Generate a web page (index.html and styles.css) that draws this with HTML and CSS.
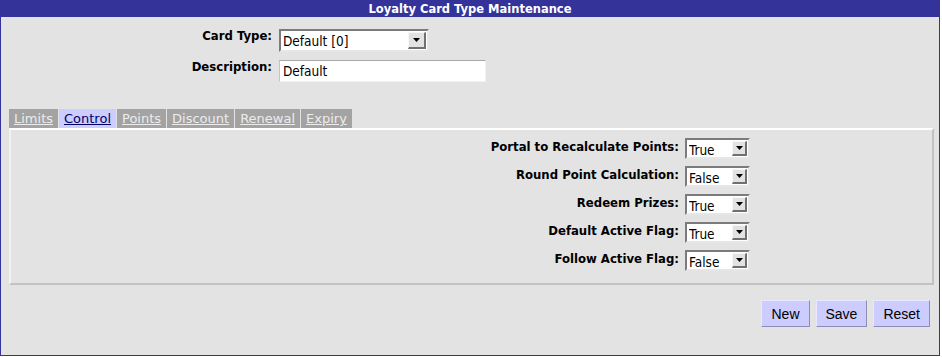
FILE: index.html
```html
<!DOCTYPE html>
<html lang="en">
<head>
    <meta charset="utf-8" />
    <link rel="stylesheet" href="styles.css">
    <title>Loyalty Card Type Maintenance</title>
</head>
<body>
    <div class="frame">
        <div class="titlebar">Loyalty Card Type Maintenance</div>

        <div class="header">
            <label for="cardType" class="hlabel">Card Type:</label>
            <span class="combo combo-wide">
                <select id="cardType"><option>Default [0]</option></select>
                <span class="arrow"><svg width="7" height="4" viewBox="0 0 7 4"><path d="M0 0h7L3.5 4z" fill="#000"/></svg></span>
            </span>
            <label for="description" class="hlabel">Description:</label>
            <input type="text" id="description" class="desc" value="Default">
        </div>

        <div class="tabs">
            <a class="tab">Limits</a>
            <a class="tab active">Control</a>
            <a class="tab">Points</a>
            <a class="tab">Discount</a>
            <a class="tab">Renewal</a>
            <a class="tab">Expiry</a>
        </div>

        <div class="panel">
            <div class="fields">
                <label class="flabel">Portal to Recalculate Points:</label>
                <span class="combo"><select><option>True</option><option>False</option></select><span class="arrow"><svg width="7" height="4" viewBox="0 0 7 4"><path d="M0 0h7L3.5 4z" fill="#000"/></svg></span></span>

                <label class="flabel">Round Point Calculation:</label>
                <span class="combo"><select><option>False</option><option>True</option></select><span class="arrow"><svg width="7" height="4" viewBox="0 0 7 4"><path d="M0 0h7L3.5 4z" fill="#000"/></svg></span></span>

                <label class="flabel">Redeem Prizes:</label>
                <span class="combo"><select><option>True</option><option>False</option></select><span class="arrow"><svg width="7" height="4" viewBox="0 0 7 4"><path d="M0 0h7L3.5 4z" fill="#000"/></svg></span></span>

                <label class="flabel">Default Active Flag:</label>
                <span class="combo"><select><option>True</option><option>False</option></select><span class="arrow"><svg width="7" height="4" viewBox="0 0 7 4"><path d="M0 0h7L3.5 4z" fill="#000"/></svg></span></span>

                <label class="flabel">Follow Active Flag:</label>
                <span class="combo"><select><option>False</option><option>True</option></select><span class="arrow"><svg width="7" height="4" viewBox="0 0 7 4"><path d="M0 0h7L3.5 4z" fill="#000"/></svg></span></span>
            </div>
        </div>

        <div class="actions">
            <button>New</button>
            <button>Save</button>
            <button>Reset</button>
        </div>
    </div>
</body>
</html>
```

FILE: styles.css
```css
body {
    margin: 0;
    background-color: #ffffff;
    font-family: "DejaVu Sans Condensed", "DejaVu Sans", sans-serif;
}

.frame {
    width: 938px;
    height: 354px;
    border: 1px solid #333399;
    background-color: #e3e3e3;
}

.titlebar {
    height: 16px;
    line-height: 16px;
    background-color: #333399;
    color: #ffffff;
    font-family: "DejaVu Sans", sans-serif;
    font-weight: bold;
    font-size: 11.5px;
    text-align: center;
}

.header {
    display: grid;
    grid-template-columns: 271px auto;
    column-gap: 7px;
    row-gap: 8px;
    margin-top: 12px;
    align-items: start;
    justify-content: start;
}

.hlabel, .flabel {
    font-weight: bold;
    font-size: 13px;
    line-height: 16px;
    text-align: right;
    color: #000000;
}

.hlabel {
    margin-top: -1px;
}

.combo {
    position: relative;
    display: inline-block;
    box-sizing: border-box;
    border-style: solid;
    border-width: 2px;
    border-color: #7b7b7b #e6e6e6 #e6e6e6 #7b7b7b;
    background-color: #ffffff;
}

.combo select {
    appearance: none;
    -webkit-appearance: none;
    border: none;
    outline: none;
    background: transparent;
    width: 100%;
    height: 100%;
    padding: 0 0 0 2px;
    margin: 0;
    font-family: "DejaVu Sans Condensed", "DejaVu Sans", sans-serif;
    font-size: 13.5px;
    color: #000000;
}

.combo .arrow {
    position: absolute;
    top: 1px;
    right: 1px;
    bottom: 1px;
    width: 15px;
    box-sizing: border-box;
    background-color: #e2e2e2;
    border-style: solid;
    border-width: 1px 2px 2px 1px;
    border-color: #f6f6f6 #707070 #707070 #f6f6f6;
    display: flex;
    justify-content: center;
    align-items: center;
}

.combo-wide {
    width: 150px;
    height: 23px;
}

.combo-wide .arrow {
    width: 18px;
}

.desc {
    box-sizing: border-box;
    width: 207px;
    height: 22px;
    margin: 0;
    padding: 0 3px;
    border-style: solid;
    border-width: 1px;
    border-color: #a8a8a8 #f2f2f2 #f2f2f2 #c4c4c4;
    background-color: #ffffff;
    font-family: "DejaVu Sans Condensed", "DejaVu Sans", sans-serif;
    font-size: 13.5px;
    color: #000000;
}

.tabs {
    display: flex;
    gap: 1px;
    margin: 27px 0 0 8px;
}

.tab {
    height: 19px;
    line-height: 20px;
    padding: 0 5px;
    background-color: #a3a3a3;
    color: #ececec;
    font-family: "DejaVu Sans", sans-serif;
    font-size: 13px;
    text-decoration: underline;
    cursor: pointer;
}

.tab.active {
    background-color: #ccccff;
    color: #000066;
}

.panel {
    box-sizing: border-box;
    width: 925px;
    height: 157px;
    margin-left: 8px;
    border-style: solid;
    border-width: 2px;
    border-color: #ffffff #c2c2c2 #c2c2c2 #f2f2f2;
    padding-top: 8px;
}

.fields {
    display: grid;
    grid-template-columns: 668px 65px;
    column-gap: 6px;
    row-gap: 7px;
    align-items: center;
}

.fields .flabel {
    margin-top: -3px;
}

.fields .combo {
    height: 21px;
}

.actions {
    display: flex;
    justify-content: flex-end;
    gap: 6px;
    margin-top: 15px;
    padding-right: 9px;
}

button {
    height: 27px;
    padding: 0 9px;
    background-color: #ccccff;
    border-style: solid;
    border-width: 1px;
    border-color: #e8e8ff #8c8cb4 #8c8cb4 #e8e8ff;
    font-family: "Liberation Sans", Arial, sans-serif;
    font-size: 14px;
    color: #000000;
    cursor: pointer;
}
```
